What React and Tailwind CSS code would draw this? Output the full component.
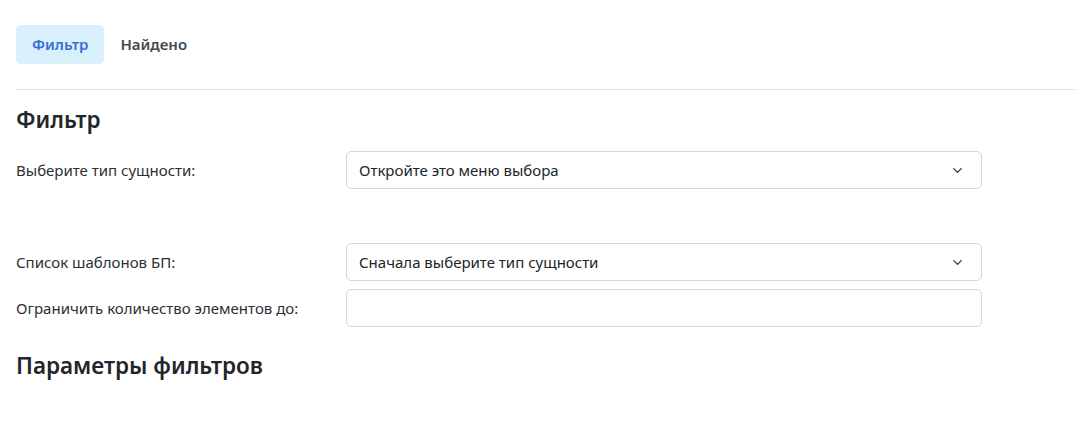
import { ChevronDown } from "lucide-react";

const font = { fontFamily: '"Noto Sans", "Open Sans", sans-serif' };

function Select({ text }) {
  return (
    <div className="flex items-center justify-between w-[636px] h-[38px] pl-3 pr-4 border border-[#d4d7dd] rounded-[5px] bg-white text-[15px] text-[#212529]">
      <span>{text}</span>
      <ChevronDown size={15} strokeWidth={2.2} className="text-[#343a40]" />
    </div>
  );
}

function Row({ label, children, className = "" }) {
  return (
    <div className={`flex items-center ${className}`}>
      <div className="w-[330px] text-[15px] text-[#2b2f33]">{label}</div>
      {children}
    </div>
  );
}

export default function App() {
  return (
    <div className="w-[1075px] h-[445px] bg-white pt-[25px] pl-4" style={font}>
      <div className="flex items-center text-[15px] font-semibold">
        <div className="h-[39px] px-4 flex items-center rounded-[5px] bg-[#d8effc] text-[#3a6cd3]">
          Фильтр
        </div>
        <div className="h-[39px] px-4 flex items-center text-[#444a50]">Найдено</div>
      </div>
      <div className="mt-[25px] border-t border-[#dfe1e4]" />
      <h4 className="mt-[16px] text-[22.5px] font-semibold text-[#22262a] leading-7">Фильтр</h4>
      <Row label="Выберите тип сущности:" className="mt-[17px]">
        <Select text="Откройте это меню выбора" />
      </Row>
      <Row label="Список шаблонов БП:" className="mt-[54px]">
        <Select text="Сначала выберите тип сущности" />
      </Row>
      <Row label="Ограничить количество элементов до:" className="mt-[8px]">
        <div className="w-[636px] h-[38px] border border-[#d4d7dd] rounded-[5px] bg-white" />
      </Row>
      <h4 className="mt-[25px] text-[22.5px] font-semibold text-[#22262a] leading-7">Параметры фильтров</h4>
    </div>
  );
}
